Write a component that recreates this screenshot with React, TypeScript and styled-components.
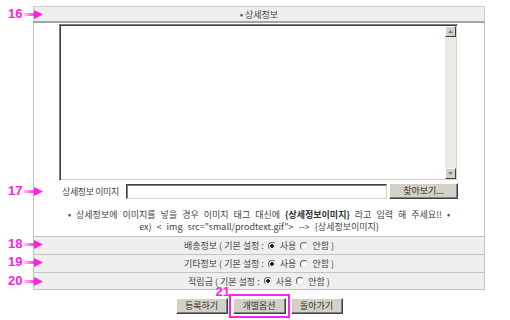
import React from "react";
import styled, { createGlobalStyle } from "styled-components";

const GlobalStyle = createGlobalStyle`
  html, body {
    margin: 0;
    padding: 0;
    background: #ffffff;
  }
  body {
    font-family: "Noto Sans CJK KR", "Noto Sans", sans-serif;
    color: #444444;
  }
`;

const Page = styled.div`
  position: relative;
  width: 510px;
  height: 320px;
  padding-top: 6px;
  box-sizing: border-box;
  overflow: hidden;
`;

const Board = styled.div`
  margin-left: 33px;
  width: 452px;
  font-size: 9px;
  letter-spacing: -0.4px;
`;

const Header = styled.div`
  height: 14px;
  display: flex;
  align-items: center;
  justify-content: center;
  background: #eeeeee;
  border: 1px solid #cccccc;
  border-bottom: 2px solid #a4a4a4;
  color: #444444;
  letter-spacing: 0;
`;

const Body = styled.div`
  border-left: 1px solid #c4c4c4;
  border-right: 1px solid #c4c4c4;
  padding-bottom: 3px;
`;

const Indented = styled.div`
  padding: 1px 0 0 25px;
`;

const TextBox = styled.div`
  width: 399px;
  height: 157px;
  display: flex;
  box-sizing: border-box;
  background: #ffffff;
  border: 1px solid;
  border-color: #808080 #ffffff #ffffff #808080;
  box-shadow: inset 1px 1px 0 #404040, inset -1px -1px 0 #d4d0c8;
  padding: 1px;
`;

const TextArea = styled.div`
  flex: 1;
`;

const ScrollBar = styled.div`
  width: 11px;
  display: flex;
  flex-direction: column;
  background: #ebe9e5;
`;

const ScrollButton = styled.div`
  height: 11px;
  box-sizing: border-box;
  background: #d4d0c8;
  border: 1px solid;
  border-color: #ffffff #404040 #404040 #ffffff;
  display: flex;
  align-items: center;
  justify-content: center;
`;

const ScrollTrack = styled.div`
  flex: 1;
`;

const Arrow = ({ down }: { down?: boolean }) => (
  <svg width="5" height="3" viewBox="0 0 5 3">
    <path d={down ? "M0 0H5L2.5 3Z" : "M2.5 0L5 3H0Z"} fill="#808080" />
  </svg>
);

const FileRow = styled.div`
  display: flex;
  align-items: center;
  height: 16px;
  margin-top: 2px;
`;

const FileLabel = styled.span`
  width: 67px;
  padding-left: 3px;
  box-sizing: border-box;
  white-space: nowrap;
`;

const FileInput = styled.div`
  width: 261px;
  height: 15px;
  box-sizing: border-box;
  background: #ffffff;
  border: 1px solid;
  border-color: #404040 #d4d0c8 #d4d0c8 #404040;
  box-shadow: inset 1px 1px 0 #808080;
`;

const Button = styled.button<{ $width: number; $marked?: boolean }>`
  position: relative;
  width: ${(p) => p.$width}px;
  height: 16px;
  padding: 0;
  margin: 0;
  box-sizing: border-box;
  background: #d4d0c8;
  border: 1px solid;
  border-color: #ffffff #404040 #404040 #ffffff;
  box-shadow: inset -1px -1px 0 #808080;
  font-family: inherit;
  font-size: 9px;
  letter-spacing: 0;
  color: #333333;
  line-height: 14px;
  ${(p) => p.$marked && "outline: 2px solid #ff22ee; outline-offset: 2px;"}
`;

const BrowseButton = styled(Button)`
  margin-left: 2px;
`;

const Note = styled.div`
  margin-top: 10px;
  text-align: center;
  line-height: 12px;
  color: #444444;
  white-space: nowrap;
  letter-spacing: 0;
  word-spacing: 3px;
`;

const Strong = styled.b`
  color: #333333;
`;

const OptionRow = styled.div<{ $last?: boolean }>`
  height: 18px;
  box-sizing: border-box;
  display: flex;
  align-items: center;
  justify-content: center;
  background: #efefef;
  border: 1px solid #c4c4c4;
  border-bottom: ${(p) => (p.$last ? "1px solid #c4c4c4" : "none")};
  white-space: pre;
  letter-spacing: 0;
`;

const Radio = styled.span<{ $checked?: boolean }>`
  display: inline-block;
  width: 8px;
  height: 8px;
  box-sizing: border-box;
  border-radius: 50%;
  border: 1px solid;
  border-color: #606060 #e0e0e0 #e0e0e0 #606060;
  background: ${(p) =>
    p.$checked
      ? "radial-gradient(circle, #222 0 1.6px, #fff 1.8px)"
      : "#ffffff"};
  margin: 0 2px;
`;

const ButtonBar = styled.div`
  display: flex;
  justify-content: center;
  gap: 5px;
  margin-top: 8px;
`;

const Marker = styled.div<{ $top: number }>`
  position: absolute;
  left: 8px;
  top: ${(p) => p.$top}px;
  display: flex;
  align-items: center;
  gap: 2px;
  font-family: "Liberation Sans", Arial, sans-serif;
  font-weight: bold;
  font-size: 13px;
  color: #ff22dd;
  line-height: 14px;
`;

const CalloutNumber = styled.span`
  position: absolute;
  left: -18px;
  top: -14px;
  line-height: 13px;
  font-family: "Liberation Sans", Arial, sans-serif;
  font-weight: bold;
  font-size: 13px;
  color: #ff22dd;
  letter-spacing: 0;
`;

const PinkArrow = () => (
  <svg width="19" height="9" viewBox="0 0 19 9">
    <defs>
      <linearGradient id="tail" x1="0" x2="1" y1="0" y2="0">
        <stop offset="0" stopColor="#ffc4f2" />
        <stop offset="1" stopColor="#ff22dd" />
      </linearGradient>
    </defs>
    <rect x="0" y="3" width="12" height="3" fill="url(#tail)" />
    <path d="M10 0L19 4.5L10 9Z" fill="#ff22dd" />
  </svg>
);

const markers = [
  { label: "16", top: 7 },
  { label: "17", top: 184 },
  { label: "18", top: 237 },
  { label: "19", top: 255 },
  { label: "20", top: 274 },
];

const options = ["배송정보", "기타정보", "적립금"];

export default function App() {
  return (
    <>
      <GlobalStyle />
      <Page>
        {markers.map((m) => (
          <Marker key={m.label} $top={m.top}>
            {m.label}
            <PinkArrow />
          </Marker>
        ))}
        <Board>
          <Header>• 상세정보</Header>
          <Body>
            <Indented>
              <TextBox>
                <TextArea />
                <ScrollBar>
                  <ScrollButton>
                    <Arrow />
                  </ScrollButton>
                  <ScrollTrack />
                  <ScrollButton>
                    <Arrow down />
                  </ScrollButton>
                </ScrollBar>
              </TextBox>
              <FileRow>
                <FileLabel>상세정보 이미지</FileLabel>
                <FileInput />
                <BrowseButton $width={69}>찾아보기...</BrowseButton>
              </FileRow>
            </Indented>
            <Note>
              • 상세정보에 이미지를 넣을 경우 이미지 태그 대신에{" "}
              <Strong>{"{상세정보이미지}"}</Strong> 라고 입력 해 주세요!! •
              <br />
              {'ex) < img src="small/prodtext.gif"> --> {상세정보이미지}'}
            </Note>
          </Body>
          {options.map((name, i) => (
            <OptionRow key={name} $last={i === options.length - 1}>
              {name} ( 기본 설정 : <Radio $checked /> 사용 <Radio /> 안함 )
            </OptionRow>
          ))}
          <ButtonBar>
            <Button $width={52}>등록하기</Button>
            <Button $width={53} $marked>
              <CalloutNumber>21</CalloutNumber>
              개별옵션
            </Button>
            <Button $width={52}>돌아가기</Button>
          </ButtonBar>
        </Board>
      </Page>
    </>
  );
}
